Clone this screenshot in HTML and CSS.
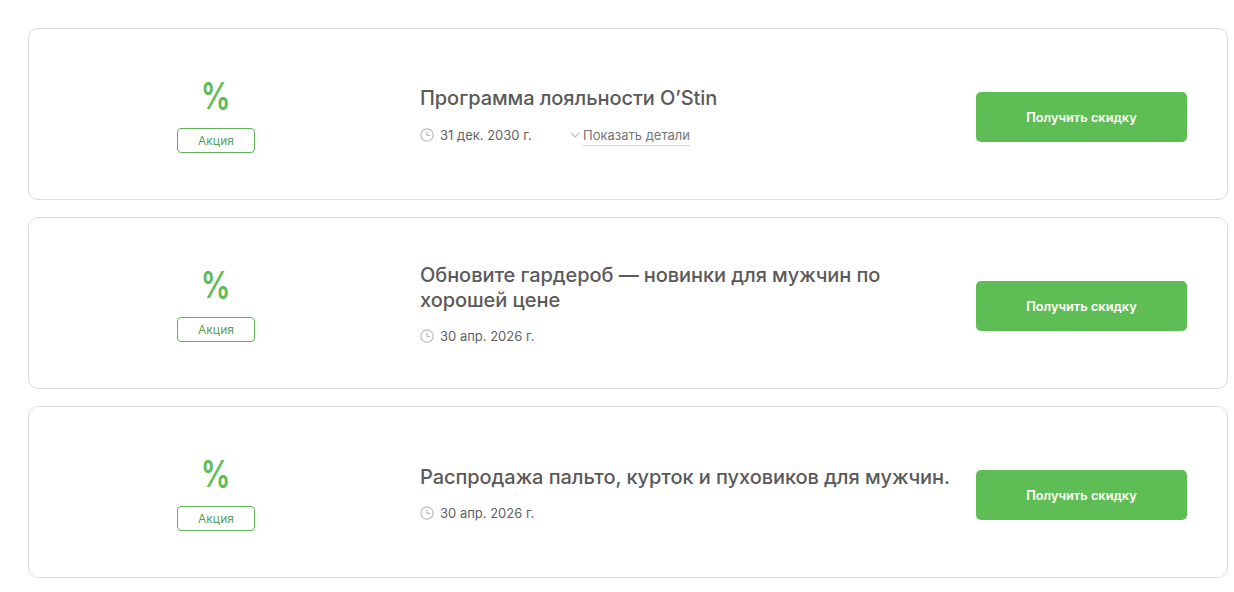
FILE: index.html
```html
<!DOCTYPE html>
<html lang="en">
<head>
  <meta charset="UTF-8" />
  <title>Акции</title>
  <link rel="stylesheet" href="styles.css">
</head>
<body>
  <div class="offers">

    <div class="offer">
      <div class="offer-type">
        <div class="percent">%</div>
        <div class="badge">Акция</div>
      </div>
      <div class="offer-info">
        <div class="offer-title">Программа лояльности O’Stin</div>
        <div class="offer-meta">
          <span class="date">
            <svg class="clock" viewBox="0 0 14 14"><circle cx="7" cy="7" r="6.2"/><path d="M7 3.4V7.3H10"/></svg>
            31 дек. 2030 г.
          </span>
          <span class="details">
            <svg class="chevron" viewBox="0 0 10 6"><path d="M1 1L5 5L9 1"/></svg>
            <span class="details-link">Показать детали</span>
          </span>
        </div>
      </div>
      <button class="get-btn">Получить скидку</button>
    </div>

    <div class="offer">
      <div class="offer-type">
        <div class="percent">%</div>
        <div class="badge">Акция</div>
      </div>
      <div class="offer-info">
        <div class="offer-title">Обновите гардероб — новинки для мужчин по хорошей цене</div>
        <div class="offer-meta">
          <span class="date">
            <svg class="clock" viewBox="0 0 14 14"><circle cx="7" cy="7" r="6.2"/><path d="M7 3.4V7.3H10"/></svg>
            30 апр. 2026 г.
          </span>
        </div>
      </div>
      <button class="get-btn">Получить скидку</button>
    </div>

    <div class="offer">
      <div class="offer-type">
        <div class="percent">%</div>
        <div class="badge">Акция</div>
      </div>
      <div class="offer-info">
        <div class="offer-title">Распродажа пальто, курток и пуховиков для мужчин.</div>
        <div class="offer-meta">
          <span class="date">
            <svg class="clock" viewBox="0 0 14 14"><circle cx="7" cy="7" r="6.2"/><path d="M7 3.4V7.3H10"/></svg>
            30 апр. 2026 г.
          </span>
        </div>
      </div>
      <button class="get-btn">Получить скидку</button>
    </div>

  </div>
</body>
</html>
```

FILE: styles.css
```css
* {
  margin: 0;
  padding: 0;
  box-sizing: border-box;
  font-family: Inter, "Noto Sans", sans-serif;
}

body {
  background: white;
  padding: 28px 6px 14px 28px;
}

.offers {
  display: flex;
  flex-direction: column;
  gap: 17px;
}

.offer {
  height: 172px;
  border: 1px solid #dcdcdc;
  border-radius: 10px;
  display: flex;
  align-items: center;
  padding-right: 40px;
}

.offer-type {
  width: 374px;
  flex-shrink: 0;
  display: flex;
  flex-direction: column;
  align-items: center;
  gap: 8px;
}

.percent {
  font-size: 37px;
  line-height: 44px;
  font-weight: 600;
  color: #5fbb56;
  transform: translateY(-2px) scaleX(0.8);
}

.badge {
  width: 78px;
  height: 25px;
  line-height: 24px;
  text-align: center;
  border: 1px solid #62b35a;
  border-radius: 4px;
  font-size: 12px;
  letter-spacing: 0.1px;
  color: #5a9e54;
}

.offer-info {
  width: 535px;
  margin-left: 17px;
  margin-right: 21px;
  padding-top: 3px;
}

.offer-title {
  font-size: 20px;
  line-height: 25px;
  font-weight: 500;
  letter-spacing: -0.07px;
  color: #5a5a5a;
}

.offer-meta {
  display: flex;
  align-items: center;
  margin-top: 13px;
  font-size: 13px;
  line-height: 20px;
  color: #626262;
}

.date {
  display: flex;
  align-items: center;
  gap: 6px;
  width: 150px;
}

.clock {
  width: 14px;
  height: 14px;
  fill: none;
  stroke: #b9bcbf;
  stroke-width: 1.2;
}

.details {
  display: flex;
  align-items: center;
  gap: 3px;
  margin-top: 1px;
}

.chevron {
  width: 10px;
  height: 6px;
  fill: none;
  stroke: #bdbdbd;
  stroke-width: 1.1;
}

.details-link {
  color: #757575;
  border-bottom: 1px solid #d6d6d6;
}

.get-btn {
  width: 211px;
  height: 50px;
  flex-shrink: 0;
  margin-top: 6px;
  background-color: #5fbd55;
  color: white;
  border: none;
  border-radius: 5px;
  font-size: 12.8px;
  font-weight: 600;
  cursor: pointer;
}
```
